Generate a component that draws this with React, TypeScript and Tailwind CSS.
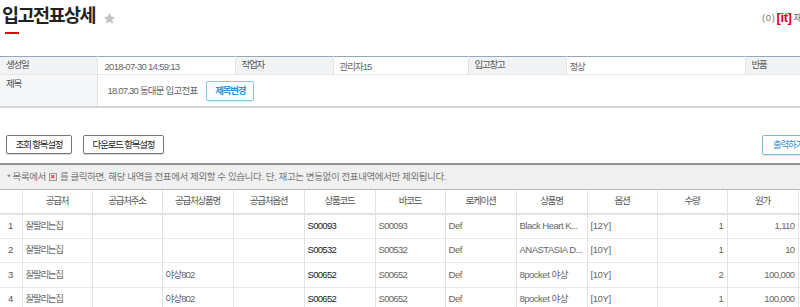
import React from 'react'

const FONT = "font-['Liberation_Sans','Noto_Sans_CJK_KR',sans-serif]"

const COLS = [22, 70, 70, 71, 71, 71, 70, 71, 71, 70, 70, 71, 70, 70]
const HEADERS = ['', '공급처', '공급처주소', '공급처상품명', '공급처옵션', '상품코드', '바코드', '로케이션', '상품명', '옵션', '수량', '원가', '', '']

const ROWS = [
  { no: 1, sup: '잘팔리는집', supName: '', code: 'S00093', bar: 'S00093', loc: 'Def', name: 'Black Heart K...', opt: '[12Y]', qty: 1, cost: '1,110' },
  { no: 2, sup: '잘팔리는집', supName: '', code: 'S00532', bar: 'S00532', loc: 'Def', name: 'ANASTASIA D...', opt: '[10Y]', qty: 1, cost: '10' },
  { no: 3, sup: '잘팔리는집', supName: '야상802', code: 'S00652', bar: 'S00652', loc: 'Def', name: '8pocket 야상', opt: '[10Y]', qty: 2, cost: '100,000' },
  { no: 4, sup: '잘팔리는집', supName: '야상802', code: 'S00652', bar: 'S00652', loc: 'Def', name: '8pocket 야상', opt: '[10Y]', qty: 1, cost: '100,000' },
]

function Star() {
  return (
    <svg width="13" height="13" viewBox="0 0 24 24" className="mt-[9px] ml-[8px]">
      <path d="M12 1.5l3.2 6.9 7.3.8-5.4 5 1.5 7.3L12 17.8l-6.6 3.7 1.5-7.3-5.4-5 7.3-.8z" fill="#c4c4c4" />
    </svg>
  )
}

export default function App() {
  return (
    <div className={`w-[800px] h-[307px] overflow-hidden bg-white ${FONT}`}>
      <div className="w-[1000px]">
        {/* 제목 */}
        <div className="flex justify-between w-[809px]">
          <div>
            <div className="flex pt-[3px] pl-[2px]">
              <h1 className="text-[18.5px] leading-[26px] font-bold tracking-[-1.5px] text-[#222]">입고전표상세</h1>
              <Star />
            </div>
            <div className="mt-[3px] ml-[5px] h-[2px] w-[14px] bg-[#e60012]" />
          </div>
          <div className="flex items-center h-[14px] mt-[11px] text-[9.5px] tracking-[-1px] whitespace-nowrap">
            <span className="text-[#777] tracking-[0.6px]">(0)</span>
            <span className="text-[#e60012] font-bold text-[13px] tracking-[-0.4px] ml-[1px] mr-[2px]">[it]</span>
            <span className="text-[#666]">재고</span>
          </div>
        </div>

        {/* 기본정보 */}
        <table className="mt-[22px] w-[1000px] table-fixed border-collapse text-[9.5px] tracking-[-1.2px]">
          <colgroup>
            {[97, 138, 98, 135, 98, 179, 97, 158].map((w, i) => <col key={i} style={{ width: w }} />)}
          </colgroup>
          <tbody>
            <tr className="h-[17px] border-t border-[#98a6b9] border-b border-b-[#e8e8e8]">
              <td className="bg-[#f1f3f5] text-[#555] pl-[6px] align-top pt-[1px] border-r border-[#e3e3e3]">생성일</td>
              <td className="text-[#666] pl-[7px] pt-[2px] tracking-[-0.7px] border-r border-[#e3e3e3]">2018-07-30 14:59:13</td>
              <td className="bg-[#f1f3f5] text-[#555] pl-[6px] align-top pt-[1px] border-r border-[#e3e3e3]">작업자</td>
              <td className="text-[#666] pl-[6px] pt-[2px] tracking-[-1px] border-r border-[#e3e3e3]">관리자15</td>
              <td className="bg-[#f1f3f5] text-[#555] pl-[6px] align-top pt-[1px] border-r border-[#e3e3e3]">입고창고</td>
              <td className="text-[#666] pl-[3px] pt-[3px] border-r border-[#e3e3e3]">정상</td>
              <td className="bg-[#f1f3f5] text-[#555] pl-[6px] align-top pt-[1px] border-r border-[#e3e3e3]">반품</td>
              <td />
            </tr>
            <tr className="h-[32px] border-b-2 border-[#d6d6d6]">
              <td className="bg-[#f5f6f7] text-[#555] pl-[6px] align-top pt-[2px] border-r border-[#e3e3e3]">제목</td>
              <td colSpan={7}>
                <div className="flex items-center pl-[10px] pt-[1px]">
                  <span className="text-[#666] tracking-[-0.8px]">18.07.30 동대문 입고전표</span>
                  <button className="ml-[9px] h-[20px] w-[48px] rounded-[2px] border border-[#86c4e8] bg-white text-[#2f8ed3] font-bold text-[9.5px] tracking-[-1.2px] shadow-[0_1px_1px_rgba(0,0,0,0.08)]">
                    제목변경
                  </button>
                </div>
              </td>
            </tr>
          </tbody>
        </table>

        {/* 버튼 */}
        <div className="flex items-center mt-[27px] w-[830px] text-[9.5px] tracking-[-1.2px]">
          <button className="ml-[6px] h-[19px] w-[66px] border border-[#777] rounded-[2px] bg-white text-[#222] shadow-[0_1px_1px_rgba(0,0,0,0.15)]">조회 항목설정</button>
          <button className="ml-[11px] h-[19px] w-[81px] border border-[#777] rounded-[2px] bg-white text-[#222] shadow-[0_1px_1px_rgba(0,0,0,0.15)]">다운로드 항목설정</button>
          <button className="ml-auto h-[20px] w-[68px] border border-[#7ab9e2] rounded-[2px] bg-white text-[#2f8ed3] shadow-[0_1px_1px_rgba(0,0,0,0.1)] text-left pl-[10px]">출력하기</button>
        </div>

        {/* 안내 */}
        <div className="mt-[8px] h-[27px] border-t-2 border-[#949494] border-b border-b-[#b8b8b8] bg-[#f0f0f0] flex items-center pl-[7px] text-[9.5px] tracking-[-0.4px] text-[#777] whitespace-nowrap">
          * 목록에서
          <span className="mx-[3px] inline-flex items-center justify-center w-[8px] h-[8px] border border-[#999] bg-[#fde4e4] text-[#e00] text-[7px] leading-none font-bold tracking-normal">×</span>
          를 클릭하면, 해당 내역을 전표에서 제외할 수 있습니다. 단, 재고는 변동없이 전표내역에서만 제외됩니다.
        </div>

        {/* 목록 */}
        <table className="w-[938px] table-fixed border-collapse text-[9.5px] tracking-[-1.2px]">
          <colgroup>
            {COLS.map((w, i) => <col key={i} style={{ width: w }} />)}
          </colgroup>
          <thead>
            <tr className="h-[24px] border-b-2 border-[#e2e2e2]">
              {HEADERS.map((h, i) => (
                <th key={i} className="font-normal text-[#555] text-center border-r border-[#e3e3e3]">{h}</th>
              ))}
            </tr>
          </thead>
          <tbody>
            {ROWS.map(r => (
              <tr key={r.no} className="h-[24.5px] border-b border-[#e8e8e8] text-[#666]">
                <td className="text-center text-[#555] tracking-normal border-r border-[#e3e3e3]">{r.no}</td>
                <td className="pl-[3px] tracking-[-1.3px] border-r border-[#e3e3e3]">{r.sup}</td>
                <td className="border-r border-[#e3e3e3]" />
                <td className="pl-[3px] tracking-[-0.9px] border-r border-[#e3e3e3]">{r.supName}</td>
                <td className="border-r border-[#e3e3e3]" />
                <td className="pl-[3px] text-[#222] tracking-[-0.7px] border-r border-[#e3e3e3]">{r.code}</td>
                <td className="pl-[3px] tracking-[-0.7px] border-r border-[#e3e3e3]">{r.bar}</td>
                <td className="pl-[3px] tracking-[-0.4px] border-r border-[#e3e3e3]">{r.loc}</td>
                <td className="pl-[3px] tracking-[-0.5px] border-r border-[#e3e3e3] whitespace-nowrap overflow-hidden">{r.name}</td>
                <td className="pl-[3px] tracking-[-0.4px] border-r border-[#e3e3e3]">{r.opt}</td>
                <td className="pr-[4px] text-right border-r border-[#e3e3e3]">{r.qty}</td>
                <td className="pr-[3px] text-right tracking-[-0.6px] border-r border-[#e3e3e3]">{r.cost}</td>
                <td className="border-r border-[#e3e3e3]" />
                <td />
              </tr>
            ))}
          </tbody>
        </table>
      </div>
    </div>
  )
}
